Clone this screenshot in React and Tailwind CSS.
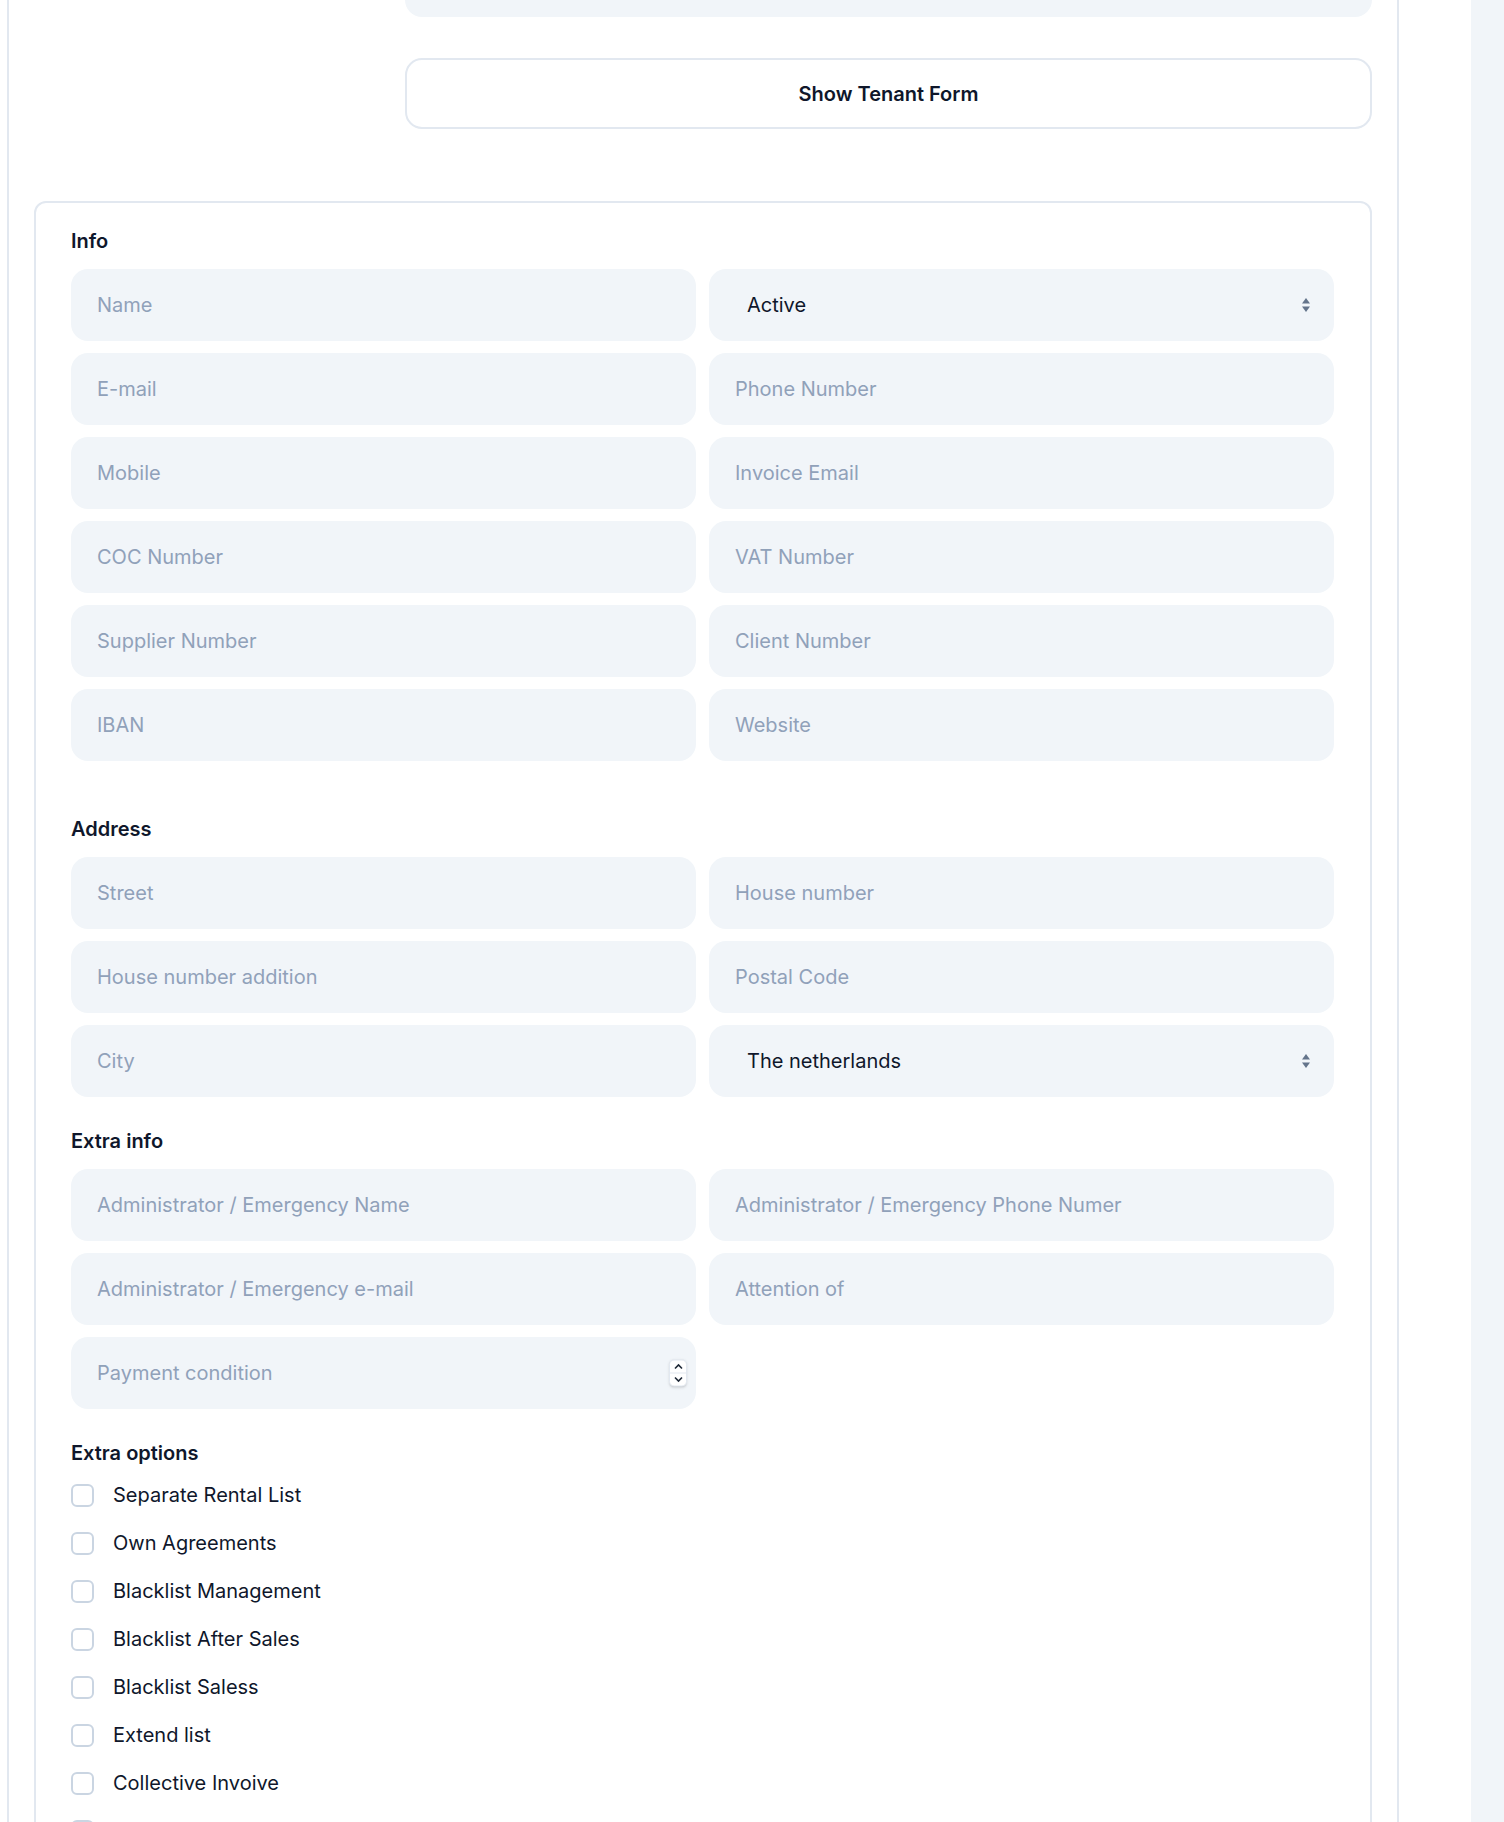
import React from "react";

const infoFields = [
  ["Name", { select: "Active" }],
  ["E-mail", "Phone Number"],
  ["Mobile", "Invoice Email"],
  ["COC Number", "VAT Number"],
  ["Supplier Number", "Client Number"],
  ["IBAN", "Website"],
];

const addressFields = [
  ["Street", "House number"],
  ["House number addition", "Postal Code"],
  ["City", { select: "The netherlands" }],
];

const extraFields = [
  ["Administrator / Emergency Name", "Administrator / Emergency Phone Numer"],
  ["Administrator / Emergency e-mail", "Attention of"],
  [{ number: "Payment condition" }, null],
];

// last one is cut off by the bottom of the page
const options = [
  "Separate Rental List",
  "Own Agreements",
  "Blacklist Management",
  "Blacklist After Sales",
  "Blacklist Saless",
  "Extend list",
  "Collective Invoive",
  "",
];

function SelectArrows() {
  return (
    <svg className="pointer-events-none absolute right-[23px] top-1/2 -translate-y-1/2" width="10" height="16" viewBox="0 0 10 16">
      <path d="M5 1 L9 6.5 H1 Z" fill="#64748b" />
      <path d="M5 15 L9 9.5 H1 Z" fill="#64748b" />
    </svg>
  );
}

function Field({ field }) {
  if (!field) return <div />;

  if (typeof field === "object" && field.select) {
    return (
      <div className="relative">
        <select
          defaultValue={field.select}
          className="h-[72px] w-full appearance-none rounded-[17px] bg-slate-100 pl-[38px] pr-12 text-[20px] text-slate-900 outline-none"
        >
          <option>{field.select}</option>
        </select>
        <SelectArrows />
      </div>
    );
  }

  if (typeof field === "object" && field.number) {
    return (
      <div className="relative">
        <input
          type="text"
          placeholder={field.number}
          className="h-[72px] w-full rounded-[17px] bg-slate-100 px-[26px] text-[20px] text-slate-900 outline-none placeholder:text-slate-400"
        />
        {/* spin buttons */}
        <div className="absolute right-[9px] top-1/2 flex h-[27px] w-[18px] -translate-y-1/2 flex-col overflow-hidden rounded-[5px] border border-slate-200 bg-white shadow-sm">
          <div className="flex flex-1 items-center justify-center border-b border-slate-200">
            <svg width="9" height="6" viewBox="0 0 9 6">
              <path d="M1 5 L4.5 1.5 L8 5" fill="none" stroke="#1f2937" strokeWidth="1.6" />
            </svg>
          </div>
          <div className="flex flex-1 items-center justify-center">
            <svg width="9" height="6" viewBox="0 0 9 6">
              <path d="M1 1 L4.5 4.5 L8 1" fill="none" stroke="#1f2937" strokeWidth="1.6" />
            </svg>
          </div>
        </div>
      </div>
    );
  }

  return (
    <input
      type="text"
      placeholder={field}
      className="h-[72px] w-full rounded-[17px] bg-slate-100 px-[26px] text-[20px] text-slate-900 outline-none placeholder:text-slate-400"
    />
  );
}

function Section({ title, rows, className = "" }) {
  return (
    <div className={className}>
      <h3 className="mb-[14px] text-[20px] font-semibold leading-[28px] text-slate-900">{title}</h3>
      <div className="grid grid-cols-2 gap-x-[13px] gap-y-[12px]">
        {rows.map((row, i) => (
          <React.Fragment key={i}>
            <Field field={row[0]} />
            <Field field={row[1]} />
          </React.Fragment>
        ))}
      </div>
    </div>
  );
}

export default function App() {
  return (
    <div className="flex h-[1822px] w-full overflow-hidden bg-white font-['Inter',sans-serif]">
      <div className="w-[7px] flex-none" />

      <div className="w-[1392px] flex-none border-x-2 border-slate-200 px-[25px]">
        {/* tail of the previous field */}
        <div className="flex">
          <div className="w-[371px] flex-none" />
          <div className="h-[17px] flex-1 rounded-b-[17px] bg-slate-100" />
        </div>

        <div className="mt-[41px] flex">
          <div className="w-[371px] flex-none" />
          <button className="h-[71px] flex-1 rounded-[17px] border-2 border-slate-200 bg-white text-[20px] font-semibold text-slate-900">
            Show Tenant Form
          </button>
        </div>

        <div className="mt-[72px] rounded-xl border-2 border-slate-200 pb-10 pl-[35px] pr-[36px] pt-6">
          <div className="flex flex-col gap-[30px]">
            <Section title="Info" rows={infoFields} className="mb-6" />
            <Section title="Address" rows={addressFields} />
            <Section title="Extra info" rows={extraFields} />

            <div>
              <h3 className="mb-[14px] text-[20px] font-semibold leading-[28px] text-slate-900">Extra options</h3>
              <div className="flex flex-col gap-[20px]">
                {options.map((opt, i) => (
                  <label key={i} className="flex h-[28px] items-center gap-[19px] text-[20px] leading-[28px] text-slate-900">
                    <input
                      type="checkbox"
                      className="h-[23px] w-[23px] flex-none appearance-none rounded-[6px] border-2 border-slate-300 bg-white"
                    />
                    {opt}
                  </label>
                ))}
              </div>
            </div>
          </div>
        </div>
      </div>

      <div className="flex-1" />
      <div className="w-[33px] flex-none bg-slate-100" />
    </div>
  );
}
